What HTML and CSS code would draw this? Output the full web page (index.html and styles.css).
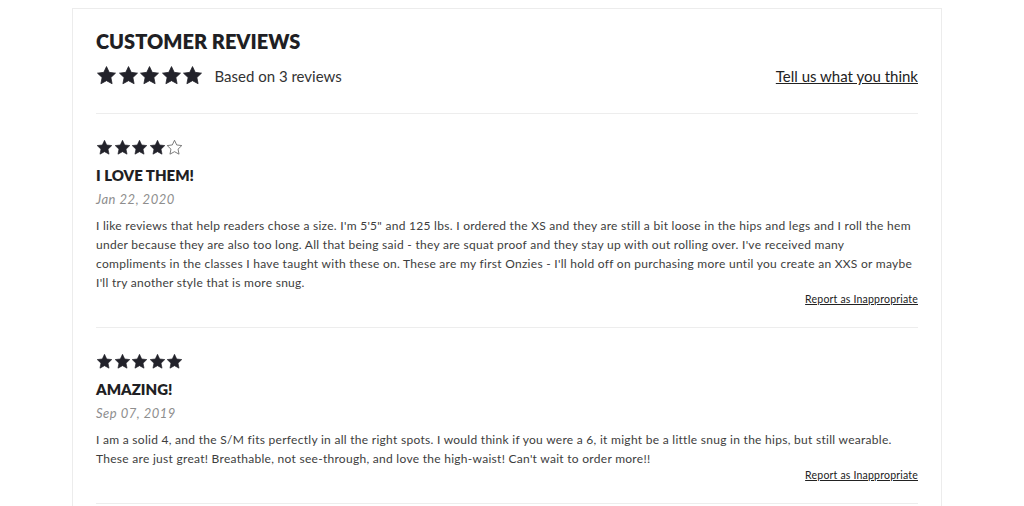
FILE: index.html
```html
<!DOCTYPE html>
<html lang="en">
<head>
    <meta charset="UTF-8">
    <title>Customer Reviews</title>
    <link rel="stylesheet" href="styles.css">
</head>
<body>
    <svg width="0" height="0" class="defs">
        <defs>
            <symbol id="star" viewBox="0 0 24 24">
                <path d="M12 1.8l3.1 6.6 7.2.9-5.3 5 1.4 7.1L12 17.9l-6.4 3.5 1.4-7.1-5.3-5 7.2-.9z" stroke-linejoin="round"/>
            </symbol>
        </defs>
    </svg>

    <div class="container">
        <h2>CUSTOMER REVIEWS</h2>
        <div class="summary">
            <div class="summary-left">
                <div class="stars big">
                    <svg><use href="#star"/></svg><svg><use href="#star"/></svg><svg><use href="#star"/></svg><svg><use href="#star"/></svg><svg><use href="#star"/></svg>
                </div>
                <span class="based">Based on 3 reviews</span>
            </div>
            <a href="#" class="tell">Tell us what you think</a>
        </div>

        <div class="review">
            <div class="stars">
                <svg><use href="#star"/></svg><svg><use href="#star"/></svg><svg><use href="#star"/></svg><svg><use href="#star"/></svg><svg class="empty"><use href="#star"/></svg>
            </div>
            <h3>I LOVE THEM!</h3>
            <div class="date">Jan 22, 2020</div>
            <p>I like reviews that help readers chose a size. I'm 5'5" and 125 lbs. I ordered the XS and they are still a bit loose in the hips and legs and I roll the hem under because they are also too long. All that being said - they are squat proof and they stay up with out rolling over. I've received many<br>compliments in the classes I have taught with these on. These are my first Onzies - I'll hold off on purchasing more until you create an XXS or maybe I'll try another style that is more snug.</p>
            <div class="report"><a href="#">Report as Inappropriate</a></div>
        </div>

        <div class="review">
            <div class="stars">
                <svg><use href="#star"/></svg><svg><use href="#star"/></svg><svg><use href="#star"/></svg><svg><use href="#star"/></svg><svg><use href="#star"/></svg>
            </div>
            <h3>AMAZING!</h3>
            <div class="date">Sep 07, 2019</div>
            <p>I am a solid 4, and the S/M fits perfectly in all the right spots. I would think if you were a 6, it might be a little snug in the hips, but still wearable. These are just great! Breathable, not see-through, and love the high-waist! Can't wait to order more!!</p>
            <div class="report"><a href="#">Report as Inappropriate</a></div>
        </div>
    </div>
</body>
</html>
```

FILE: styles.css
```css
body {
    font-family: 'Lato', 'Open Sans', sans-serif;
    background: white;
    margin: 0;
    padding: 8px 0 0 0;
    color: #333;
    overflow: hidden;
}

.defs {
    position: absolute;
}

.container {
    margin-left: 72px;
    width: 822px;
    padding: 20px 23px 0 23px;
    border: 1px solid #ececec;
    border-bottom: none;
    height: 600px;
}

h2 {
    font-family: 'Lato', sans-serif;
    font-weight: 800;
    font-size: 20px;
    color: #1f1f24;
    margin: 0;
    line-height: 24px;
}

.summary {
    display: flex;
    justify-content: space-between;
    align-items: center;
    margin-top: 12px;
    padding-bottom: 27px;
    border-bottom: 1px solid #ededed;
}

.summary-left {
    display: flex;
    align-items: center;
}

.stars {
    display: flex;
    fill: #22222a;
    stroke: #22222a;
    stroke-width: 0.9;
}

.stars svg {
    width: 17px;
    height: 17px;
    margin-right: 0.5px;
}

.stars svg.empty {
    fill: none;
    stroke: #666;
    stroke-width: 1.2;
}

.stars.big svg {
    width: 21px;
    height: 21px;
    margin-right: 0.5px;
}

.based {
    margin-left: 11px;
    font-size: 15px;
    color: #333;
}

.tell {
    color: #222;
    font-size: 15px;
    text-decoration: underline;
}

.review {
    padding-top: 25px;
    padding-bottom: 22px;
    border-bottom: 1px solid #ededed;
}

h3 {
    margin: 9px 0 0 0;
    font-size: 15px;
    font-weight: 800;
    color: #1f1f24;
    line-height: 20px;
}

.date {
    margin-top: 5px;
    font-size: 13px;
    font-style: italic;
    color: #8e8e8e;
    line-height: 18px;
    letter-spacing: 0.5px;
}

.review p {
    margin: 8px 0 0 0;
    font-size: 12px;
    line-height: 19px;
    letter-spacing: 0.28px;
    color: #3d3d3d;
}

.report {
    text-align: right;
    margin-top: 1px;
    font-size: 10.5px;
    letter-spacing: 0.2px;
}

.report a {
    color: #222;
}
```
